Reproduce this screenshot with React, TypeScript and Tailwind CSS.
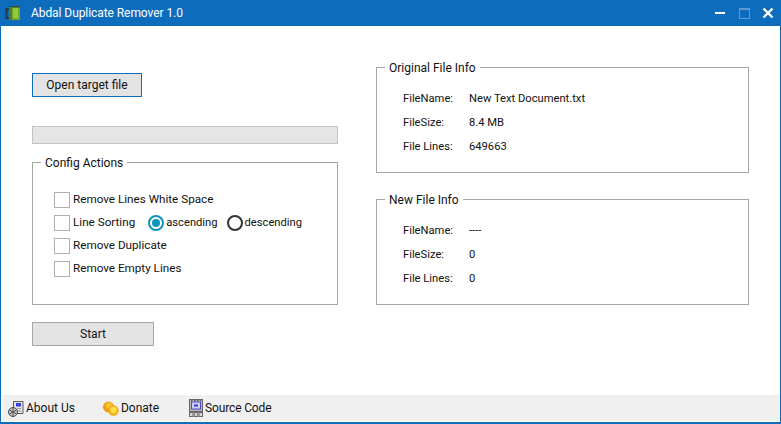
const font = { fontFamily: 'Roboto, "Open Sans", sans-serif' };

function Check({ label }: { label: string }) {
  return (
    <div className="flex items-center h-[23px]">
      <span className="w-[16px] h-[16px] border border-[#b0b0b0] bg-white mr-[3px]" />
      <span className="text-[11.7px]">{label}</span>
    </div>
  );
}

function Info({ title, rows, className }: { title: string; rows: [string, string][]; className: string }) {
  return (
    <fieldset className={`border border-[#a6a6a6] w-[373px] ${className}`}>
      <legend className="ml-[8px] px-[4px] pt-[2px] leading-[16px] text-[12px]">{title}</legend>
      <div className="flex flex-col mt-[11px] pl-[26px] text-[11.2px]">
        {rows.map(([k, v]) => (
          <div key={k} className="flex h-[24px] items-center">
            <span className="w-[66px]">{k}</span>
            <span>{v}</span>
          </div>
        ))}
      </div>
    </fieldset>
  );
}

function AboutIcon() {
  return (
    <svg width="17" height="17" viewBox="0 0 17 17" className="shrink-0">
      <path d="M5.5 11V1.5h9.5v12H9" fill="#e4e4ea" stroke="#5a5a5a" />
      <rect x="8" y="3" width="5" height="3.5" fill="#3a40dc" />
      <path d="M9 8.5h4M10 11h3" stroke="#9a9a9a" />
      <circle cx="5" cy="12" r="4.5" fill="#c4c4c4" stroke="#4a4a4a" />
      <path d="M1.5 10l7 4M1.5 14l7-4M5 7.5v9" stroke="#4a4a4a" strokeWidth="0.9" />
    </svg>
  );
}

function CoinIcon() {
  return (
    <svg width="16" height="15" viewBox="0 0 16 15" className="shrink-0">
      <circle cx="5.5" cy="6" r="5.5" fill="#ee9f16" />
      <circle cx="6" cy="4.5" r="3" fill="#fbc52e" />
      <circle cx="10.5" cy="9.5" r="5.2" fill="#f2ac18" />
      <circle cx="10.5" cy="9" r="3.2" fill="#fde047" />
    </svg>
  );
}

function FilmIcon() {
  return (
    <svg width="14" height="18" viewBox="0 0 14 18" className="shrink-0">
      <rect x="0.5" y="0.5" width="13" height="12" fill="#b4b4b4" stroke="#666" />
      <rect x="2.5" y="3" width="9" height="7" fill="#cfcff5" stroke="#4d4dc4" />
      <path d="M5 6.5h4" stroke="#3a3ad0" strokeWidth="2" />
      <path d="M2 1.5h10" stroke="#555" strokeDasharray="1.5 1.5" />
      <rect x="0.5" y="13.5" width="3.5" height="4" fill="#d8d8d8" stroke="#666" />
      <rect x="5.2" y="13.5" width="3.5" height="4" fill="#d8d8d8" stroke="#666" />
      <rect x="10" y="13.5" width="3.5" height="4" fill="#d8d8d8" stroke="#666" />
    </svg>
  );
}

export default function App() {
  return (
    <div style={font} className="w-[781px] h-[424px] flex flex-col bg-white border-x border-b-[2px] border-[#0e6cbd] text-[12px] text-[#111] overflow-hidden">
      <div className="h-[26px] shrink-0 -mx-px bg-[#0e6cbd] flex items-center text-white">
        <svg width="16" height="16" viewBox="0 0 16 16" className="ml-[5px] shrink-0">
          <path d="M5 4H1.5v9H5" fill="none" stroke="#24384f" strokeWidth="2" />
          <rect x="4" y="1" width="11" height="14" fill="#6fa82c" />
          <rect x="4" y="1" width="11" height="1.5" fill="#34503a" />
          <rect x="8" y="3" width="5" height="10" fill="#93c93f" />
          <rect x="4" y="3" width="3" height="12" fill="#4e8022" />
        </svg>
        <span className="ml-[10px] tracking-[-0.07px]">Abdal Duplicate Remover 1.0</span>
        <div className="ml-auto flex items-center mr-[7px]">
          <span className="w-[10px] h-[2px] bg-white" />
          <span className="ml-[14px] w-[11px] h-[11px] border border-[#5f9ad8] border-t-[2px]" />
          <svg width="12" height="12" viewBox="0 0 12 12" className="ml-[12px]">
            <path d="M1.5 1.5l9 9M10.5 1.5l-9 9" stroke="white" strokeWidth="2.4" />
          </svg>
        </div>
      </div>

      <div className="flex-1 flex pl-[31px] pr-[31px] min-h-0">
        <div className="w-[306px] flex flex-col">
          <button className="mt-[47px] w-[110px] h-[24px] bg-[#e3e3e3] border border-[#0e6cbd] text-[12px]">Open target file</button>
          <div className="mt-[29px] h-[18px] bg-[#e5e5e5] border border-[#c4c4c4]" />
          <fieldset className="mt-[9px] h-[152px] border border-[#a6a6a6]">
            <legend className="ml-[8px] px-[4px] pt-[2px] leading-[16px] text-[12px]">Config Actions</legend>
            <div className="mt-[17px] pl-[21px] flex flex-col">
              <Check label="Remove Lines White Space" />
              <div className="flex items-center h-[23px]">
                <Check label="Line Sorting" />
                <span className="ml-[13px] w-[16px] h-[16px] rounded-full border-[2px] border-[#0f95b8] flex items-center justify-center">
                  <span className="w-[8px] h-[8px] rounded-full bg-[#0f95b8]" />
                </span>
                <span className="ml-[2px] pt-[2px] text-[11.2px]">ascending</span>
                <span className="ml-[9px] w-[16px] h-[16px] rounded-full border-[2px] border-[#333]" />
                <span className="ml-[2px] pt-[2px] text-[11.2px]">descending</span>
              </div>
              <Check label="Remove Duplicate" />
              <Check label="Remove Empty Lines" />
            </div>
          </fieldset>
          <button className="mt-[17px] w-[122px] h-[24px] bg-[#e3e3e3] border border-[#a6a6a6] text-[12px]">Start</button>
        </div>

        <div className="ml-[38px] flex flex-col">
          <Info
            className="mt-[32px] h-[115px]"
            title="Original File Info"
            rows={[["FileName:", "New Text Document.txt"], ["FileSize:", "8.4 MB"], ["File Lines:", "649663"]]}
          />
          <Info
            className="mt-[17px] h-[115px]"
            title="New File Info"
            rows={[["FileName:", "----"], ["FileSize:", "0"], ["File Lines:", "0"]]}
          />
        </div>
      </div>

      <div className="h-[26px] shrink-0 mb-px ml-[2px] bg-[#f0f0f0] flex items-center pl-[5px]">
        <AboutIcon />
        <span className="ml-[1px]">About Us</span>
        <span className="ml-[28px]"><CoinIcon /></span>
        <span className="ml-[2px]">Donate</span>
        <span className="ml-[30px]"><FilmIcon /></span>
        <span className="ml-[2px] tracking-[-0.15px]">Source Code</span>
      </div>
    </div>
  );
}
